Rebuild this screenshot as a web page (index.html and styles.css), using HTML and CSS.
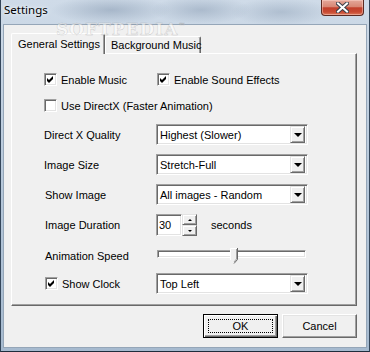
FILE: index.html
```html
<!DOCTYPE html>
<html>
<head>
<meta charset="utf-8">
<title>Settings</title>
<link rel="stylesheet" href="styles.css">
</head>
<body>
<div class="window">
  <div class="titlebar">
    <span class="title">Settings</span>
    <div class="close">
      <svg width="13" height="11" viewBox="0 0 13 11"><path d="M2 1.5 L11 9.5 M11 1.5 L2 9.5" stroke="#3a3f4a" stroke-width="4" stroke-linecap="square"/><path d="M2 1.5 L11 9.5 M11 1.5 L2 9.5" stroke="#fff" stroke-width="2" stroke-linecap="square"/></svg>
    </div>
  </div>
  <div class="client">
    <span class="wm-logo">SOFTPEDIA<sup>™</sup></span>
    <div class="tabs">
      <div class="tab active">General Settings</div>
      <div class="tab">Background Music</div>
    </div>
    <div class="panel">
      <div class="row r1">
        <label class="check"><span class="cb checked"><svg width="7" height="7" viewBox="0 0 7 7"><path d="M0 2 L2 4 L6 0 L6 3 L2 7 L0 5 Z"/></svg></span>Enable Music</label>
        <label class="check"><span class="cb checked"><svg width="7" height="7" viewBox="0 0 7 7"><path d="M0 2 L2 4 L6 0 L6 3 L2 7 L0 5 Z"/></svg></span>Enable Sound Effects</label>
      </div>
      <div class="row r2">
        <label class="check wide"><span class="cb"></span>Use DirectX (Faster Animation)</label>
      </div>
      <div class="row r3">
        <span class="lbl">Direct X Quality</span>
        <div class="select"><span class="val">Highest (Slower)</span><span class="drop"><i class="tri"></i></span></div>
      </div>
      <div class="row r4">
        <span class="lbl">Image Size</span>
        <div class="select"><span class="val">Stretch-Full</span><span class="drop"><i class="tri"></i></span></div>
      </div>
      <div class="row r5">
        <span class="lbl">Show Image</span>
        <div class="select"><span class="val">All images - Random</span><span class="drop"><i class="tri"></i></span></div>
      </div>
      <div class="row r6">
        <span class="lbl">Image Duration</span>
        <div class="spinwrap">
          <span class="spin-input">30</span>
          <span class="spin-btns"><span class="sbtn"><i class="tri-up"></i></span><span class="sbtn"><i class="tri-sm"></i></span></span>
          <span class="seconds">seconds</span>
        </div>
      </div>
      <div class="row r7">
        <span class="lbl">Animation Speed</span>
        <div class="slider">
          <div class="track"></div>
          <svg class="thumb" width="8" height="16" viewBox="0 0 8 16"><path d="M0.5 0.5 H7.5 V11.5 L4 15.5 L0.5 11.5 Z" fill="#f0f0f0"/><path d="M0.5 12 V0.5 H7" stroke="#fff" fill="none"/><path d="M7.5 0 V11.5 L4 15.5" stroke="#696969" fill="none"/><path d="M6.5 1 V11 L4 14" stroke="#a0a0a0" fill="none"/></svg>
        </div>
      </div>
      <div class="row r8">
        <label class="check clock"><span class="cb checked"><svg width="7" height="7" viewBox="0 0 7 7"><path d="M0 2 L2 4 L6 0 L6 3 L2 7 L0 5 Z"/></svg></span>Show Clock</label>
        <div class="select"><span class="val">Top Left</span><span class="drop"><i class="tri"></i></span></div>
      </div>
    </div>
    <div class="buttons">
      <button class="btn default">OK</button>
      <button class="btn">Cancel</button>
    </div>
  </div>
</div>
</body>
</html>
```
FILE: styles.css
```css
* { box-sizing: border-box; }
html, body { margin: 0; padding: 0; }
body {
  width: 370px;
  height: 352px;
  overflow: hidden;
  font-family: "Liberation Sans", Arial, sans-serif;
  font-size: 11px;
  color: #000;
  background: #2a3a4c;
}
.window {
  position: relative;
  width: 370px;
  height: 352px;
  display: flex;
  flex-direction: column;
  background:
    radial-gradient(ellipse 60px 14px at 110px 10px, rgba(120, 140, 165, 0.45), transparent),
    radial-gradient(ellipse 50px 14px at 200px 10px, rgba(120, 140, 165, 0.4), transparent),
    radial-gradient(ellipse 50px 14px at 280px 12px, rgba(120, 140, 165, 0.35), transparent),
    linear-gradient(180deg, #cfdbe8 0%, #c2d1e1 25%, #b3c5d8 60%, #a6bacf 100%);
  border-left: 1px solid #34465a;
  border-right: 1px solid #34465a;
  border-bottom: 1px solid #1f2d3c;
  padding: 0 2px 3px 2px;
  overflow: hidden;
}
.titlebar {
  position: relative;
  height: 24px;
  display: flex;
  justify-content: space-between;
  align-items: flex-start;
  flex: none;
}
.title {
  position: relative;
  font-family: "Noto Sans", "Open Sans", sans-serif;
  font-size: 11.5px;
  line-height: 16px;
  margin: 2px 0 0 1px;
  color: #000;
  text-shadow: 0 0 5px #eef3f8, 0 0 3px #eef3f8;
}
.close {
  position: relative;
  width: 43px;
  height: 16px;
  margin-right: 3px;
  border: 1px solid #5b2a22;
  border-top: none;
  border-radius: 0 0 4px 4px;
  background: linear-gradient(180deg, #e4a89b 0%, #d88775 45%, #c2402c 52%, #c84a33 80%, #dc7a5c 100%);
  box-shadow: inset 0 0 0 1px rgba(255, 220, 210, 0.45);
  display: flex;
  align-items: center;
  justify-content: center;
}
.close svg { display: block; }
.client {
  position: relative;
  flex: 1;
  background: #f0f0f0;
  border: 1px solid #95a6b8;
  padding: 8px 10px 0 7px;
  display: flex;
  flex-direction: column;
}
.wm-logo {
  position: absolute;
  left: 52px;
  top: -3px;
  line-height: 14px;
  font-family: "DejaVu Serif", serif;
  font-weight: bold;
  font-size: 17px;
  letter-spacing: 1px;
  color: rgba(255, 255, 255, 0.55);
  -webkit-text-stroke: 0.5px rgba(120, 120, 120, 0.35);
  z-index: 3;
  pointer-events: none;
}
.wm-logo sup { font-size: 7px; line-height: 0; }
.tabs {
  display: flex;
  align-items: flex-end;
  height: 20px;
  flex: none;
}
.tab {
  height: 17px;
  width: 96px;
  padding: 0 0 0 5px;
  border-left: 1px solid #fff;
  border-top: 1px solid #fff;
  border-right: 1px solid #696969;
  box-shadow: inset -1px 0 #a0a0a0;
  border-radius: 2px 2px 0 0;
  display: flex;
  align-items: center;
  background: #f0f0f0;
  white-space: nowrap;
}
.tab.active {
  position: relative;
  z-index: 1;
  width: 94px;
  height: 21px;
  margin-bottom: -1px;
  padding: 0 0 1px 6px;
}
.panel {
  width: 346px;
  height: 253px;
  flex: none;
  background: #f0f0f0;
  border-left: 1px solid #fff;
  border-top: 1px solid #fff;
  border-right: 1px solid #696969;
  border-bottom: 1px solid #696969;
  box-shadow: inset -1px -1px #a0a0a0;
  padding: 19px 0 0 32px;
  display: flex;
  flex-direction: column;
}
.row {
  display: grid;
  grid-template-columns: 112px 160px;
  align-items: center;
}
.r1 { height: 13px; grid-template-columns: 113px 160px; }
.r2 { height: 13px; margin-top: 13px; grid-template-columns: 272px; }
.r3 { height: 21px; margin-top: 12px; }
.r4 { height: 21px; margin-top: 9px; }
.r5 { height: 21px; margin-top: 9px; }
.r6 { height: 22px; margin-top: 9px; }
.r7 { height: 15px; margin-top: 12px; }
.r8 { height: 21px; margin-top: 10px; }
.lbl { white-space: nowrap; }
.r5 .lbl, .r6 .lbl, .r7 .lbl { padding-left: 1px; }
.check {
  display: flex;
  align-items: center;
  gap: 4px;
  white-space: nowrap;
}
.clock { padding-left: 1px; }
.cb {
  width: 13px;
  height: 13px;
  flex: none;
  background: #fff;
  border: 1px solid;
  border-color: #a0a0a0 #fff #fff #a0a0a0;
  box-shadow: inset 1px 1px #696969, inset -1px -1px #e3e3e3;
  display: flex;
  align-items: center;
  justify-content: center;
}
.cb svg { display: block; fill: #000; }
.select {
  width: 152px;
  height: 21px;
  background: #fff;
  border: 1px solid;
  border-color: #a0a0a0 #fff #fff #a0a0a0;
  box-shadow: inset 1px 1px #696969, inset -1px -1px #e3e3e3;
  padding: 2px;
  display: flex;
  align-items: center;
  justify-content: space-between;
}
.val { padding-left: 1px; white-space: nowrap; }
.drop {
  width: 15px;
  height: 17px;
  background: #f0f0f0;
  border: 1px solid;
  border-color: #e3e3e3 #696969 #696969 #e3e3e3;
  box-shadow: inset 1px 1px #fff, inset -1px -1px #a0a0a0;
  display: flex;
  align-items: center;
  justify-content: center;
}
.tri {
  width: 0;
  height: 0;
  border-left: 4px solid transparent;
  border-right: 4px solid transparent;
  border-top: 4px solid #000;
  margin-top: 1px;
}
.spinwrap {
  display: flex;
  align-items: center;
  height: 22px;
}
.spin-input {
  width: 26px;
  height: 22px;
  background: #fff;
  border: 1px solid;
  border-color: #a0a0a0 #fff #fff #a0a0a0;
  box-shadow: inset 1px 1px #696969, inset -1px -1px #e3e3e3;
  padding: 0 0 0 2px;
  display: flex;
  align-items: center;
}
.spin-btns {
  width: 15px;
  height: 22px;
  display: flex;
  flex-direction: column;
}
.sbtn {
  height: 11px;
  background: #f0f0f0;
  border: 1px solid;
  border-color: #e3e3e3 #696969 #696969 #e3e3e3;
  box-shadow: inset 1px 1px #fff, inset -1px -1px #a0a0a0;
  display: flex;
  align-items: center;
  justify-content: center;
}
.tri-up {
  width: 0; height: 0;
  border-left: 2px solid transparent;
  border-right: 2px solid transparent;
  border-bottom: 2px solid #000;
}
.tri-sm {
  width: 0; height: 0;
  border-left: 2px solid transparent;
  border-right: 2px solid transparent;
  border-top: 2px solid #000;
}
.seconds { margin-left: 14px; }
.slider {
  position: relative;
  width: 149px;
  height: 15px;
  margin-left: 1px;
  padding-top: 2px;
}
.track {
  height: 8px;
  background: #fff;
  border: 1px solid;
  border-color: #a0a0a0 #fff #fff #a0a0a0;
  box-shadow: inset 1px 1px #696969, inset -1px -1px #e3e3e3;
}
.thumb {
  position: absolute;
  left: 73px;
  top: 0;
  display: block;
}
.buttons {
  display: flex;
  justify-content: flex-end;
  gap: 4px;
  margin-top: 8px;
  width: 346px;
}
.btn {
  position: relative;
  width: 75px;
  height: 24px;
  font-family: "Liberation Sans", Arial, sans-serif;
  font-size: 11px;
  color: #000;
  background: #f0f0f0;
  border: 1px solid;
  border-color: #fff #696969 #696969 #fff;
  box-shadow: inset -1px -1px #a0a0a0, inset 1px 1px #e3e3e3;
  padding: 0;
  margin: 0;
  display: flex;
  align-items: center;
  justify-content: center;
}
.btn.default {
  border: 1px solid #000;
  box-shadow: inset 1px 1px #fff, inset -1px -1px #696969, inset -2px -2px #a0a0a0;
}
.btn.default::after {
  content: "";
  position: absolute;
  left: 4px;
  top: 4px;
  right: 4px;
  bottom: 4px;
  border: 1px dotted #000;
}
```
